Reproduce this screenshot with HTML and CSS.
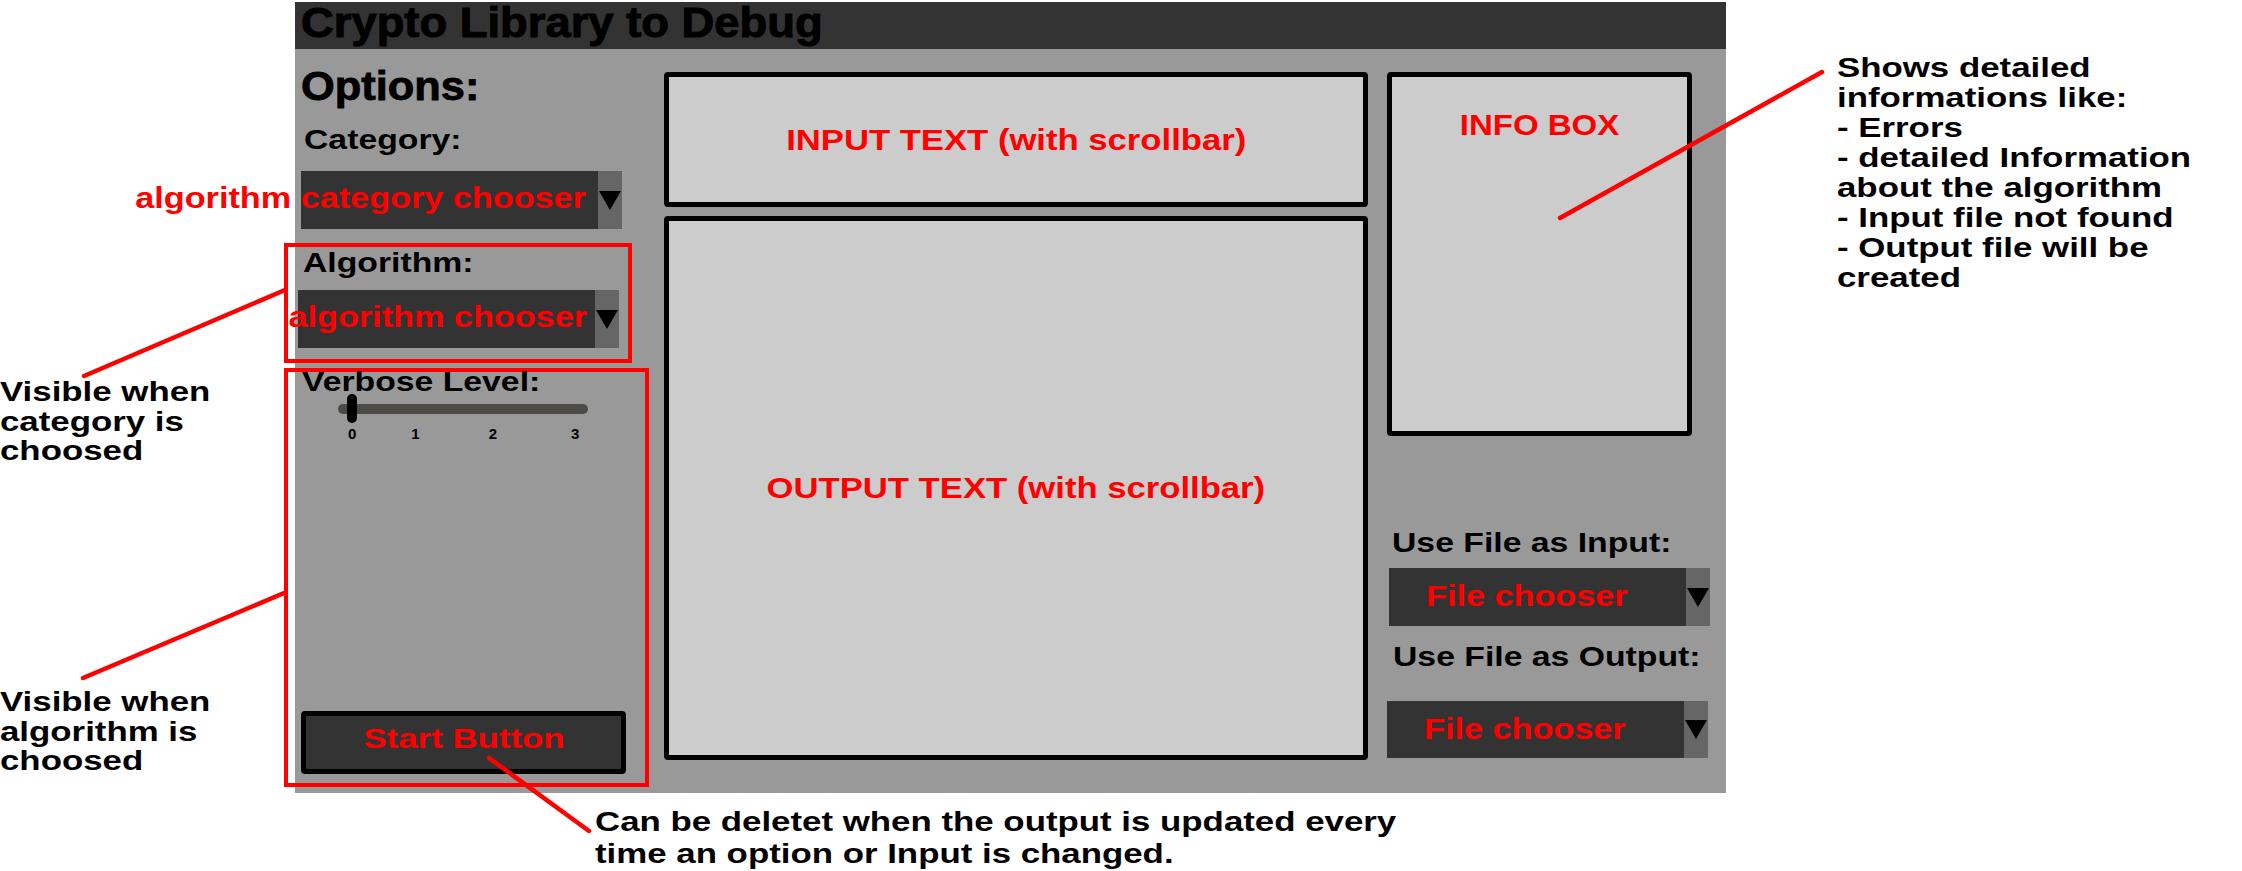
FILE: index.html
```html
<!DOCTYPE html>
<html lang="en">
<head>
<meta charset="utf-8">
<title>Crypto Library to Debug – mockup</title>
<link rel="stylesheet" href="styles.css">
</head>
<body>
<div class="page">
  <div class="app">
    <header class="titlebar"><span class="txt">Crypto Library to Debug</span></header>
    <div class="workspace">
      <aside class="options">
        <h2 class="heading"><span class="txt">Options:</span></h2>
        <div class="label label-category"><span class="txt">Category:</span></div>
        <div class="select select-category">
          <span class="select-value"><span class="txt">algorithm category chooser</span></span>
          <span class="select-arrow"><svg width="22" height="19" viewBox="0 0 22 19"><polygon points="0,0 22,0 11,19" fill="#000"/></svg></span>
        </div>
        <section class="group group-algorithm">
          <div class="label label-algorithm"><span class="txt">Algorithm:</span></div>
          <div class="select select-algorithm">
            <span class="select-value"><span class="txt">algorithm chooser</span></span>
            <span class="select-arrow"><svg width="22" height="19" viewBox="0 0 22 19"><polygon points="0,0 22,0 11,19" fill="#000"/></svg></span>
          </div>
        </section>
        <section class="group group-verbose">
          <div class="label label-verbose"><span class="txt">Verbose Level:</span></div>
          <div class="slider">
            <div class="slider-track"></div>
            <div class="slider-thumb"></div>
          </div>
          <div class="ticks">
            <span class="tick">0</span>
            <span class="tick tick-1">1</span>
            <span class="tick tick-2">2</span>
            <span class="tick tick-3">3</span>
          </div>
          <button class="start" type="button"><span class="txt">Start Button</span></button>
        </section>
      </aside>
      <main class="texts">
        <div class="textbox textbox-input"><span class="txt">INPUT TEXT (with scrollbar)</span></div>
        <div class="textbox textbox-output"><span class="txt">OUTPUT TEXT (with scrollbar)</span></div>
      </main>
      <aside class="side">
        <div class="info"><span class="txt">INFO BOX</span></div>
        <div class="label label-file-in"><span class="txt">Use File as Input:</span></div>
        <div class="select select-file select-file-in">
          <span class="select-value"><span class="txt">File chooser</span></span>
          <span class="select-arrow"><svg width="22" height="19" viewBox="0 0 22 19"><polygon points="0,0 22,0 11,19" fill="#000"/></svg></span>
        </div>
        <div class="label label-file-out"><span class="txt">Use File as Output:</span></div>
        <div class="select select-file select-file-out">
          <span class="select-value"><span class="txt">File chooser</span></span>
          <span class="select-arrow"><svg width="22" height="19" viewBox="0 0 22 19"><polygon points="0,0 22,0 11,19" fill="#000"/></svg></span>
        </div>
      </aside>
    </div>
  </div>

  <p class="note note-category">Visible when<br>category is<br>choosed</p>
  <p class="note note-algorithm">Visible when<br>algorithm is<br>choosed</p>
  <p class="note note-info">Shows detailed<br>informations like:<br>- Errors<br>- detailed Information<br>about the algorithm<br>- Input file not found<br>- Output file will be<br>created</p>
  <p class="note note-start">Can be deletet when the output is updated every<br>time an option or Input is changed.</p>

  <svg class="callouts" width="2242" height="871" viewBox="0 0 2242 871">
    <g stroke="#ff0000" stroke-width="4.5" stroke-linecap="round" fill="none">
      <line x1="84" y1="376" x2="285" y2="290"/>
      <line x1="83" y1="678" x2="284" y2="593"/>
      <line x1="489" y1="758" x2="589" y2="831"/>
      <line x1="1560" y1="218" x2="1822" y2="72"/>
    </g>
  </svg>
</div>
</body>
</html>
```

FILE: styles.css
```css
* {
  box-sizing: border-box;
}

html,
body {
  margin: 0;
  background: #ffffff;
}

body {
  font-family: "Liberation Sans", Arial, sans-serif;
  font-weight: 700;
  color: #000000;
}

.page {
  position: relative;
  width: 2242px;
  height: 871px;
  overflow: hidden;
}

/* The mockup's lettering is horizontally stretched; the inner text spans
   are widened around their anchor point. */
.txt {
  display: inline-block;
  white-space: nowrap;
  transform-origin: left center;
}

/* ---------- application frame ---------- */

.app {
  margin-left: 295px;
  padding-top: 2px;
  width: 1431px;
}

.titlebar {
  height: 47px;
  padding-left: 6px;
  background: #333333;
  font-size: 42px;
  line-height: 41px;
  white-space: nowrap;
}

.titlebar .txt {
  transform: scaleX(1.08);
  -webkit-text-stroke: 1px #000000;
}

.workspace {
  display: flex;
  height: 744px;
  padding-left: 6px;
  background: #999999;
}

/* ---------- left: options ---------- */

.options {
  width: 349px;
  display: flex;
  flex-direction: column;
}

.heading {
  margin: 17px 0 0;
  font-size: 40px;
  line-height: 40px;
  font-weight: 700;
}

.heading .txt {
  transform: scaleX(1.085);
  -webkit-text-stroke: 0.8px #000000;
}

.label {
  font-size: 27px;
  line-height: 28px;
  white-space: nowrap;
}

.label .txt {
  transform: scaleX(1.25);
}

.label-category {
  margin: 20px 0 0 3px;
}

.select {
  display: flex;
  width: 321px;
  height: 58px;
  background: #333333;
}

.select-category {
  margin-top: 17px;
}

.select-value {
  flex: 1;
  min-width: 0;
  display: flex;
  align-items: center;
  justify-content: flex-end;
  padding-right: 12px;
  padding-bottom: 3px;
  color: #ff0000;
  font-size: 29px;
  white-space: nowrap;
}

.select-value .txt {
  transform-origin: right center;
  transform: scaleX(1.18);
}

.select-arrow {
  width: 24px;
  flex: none;
  display: flex;
  align-items: center;
  justify-content: center;
  background: #666666;
}

.select-arrow svg {
  display: block;
}

.group {
  margin-left: -17px;
  border: 4px solid #ff0000;
}

.group-algorithm {
  width: 348px;
  height: 120px;
  margin-top: 14px;
  padding: 2px 0 0 10px;
}

.label-algorithm {
  margin-left: 5px;
}

.select-algorithm {
  margin-top: 13px;
}

.select-algorithm .select-value {
  padding-right: 8px;
}

.group-verbose {
  width: 365px;
  height: 419px;
  margin-top: 5px;
  padding: 0 0 9px 10px;
  display: flex;
  flex-direction: column;
}

.label-verbose {
  margin-left: 4px;
  line-height: 20px;
}

.slider {
  position: relative;
  width: 250px;
  height: 29px;
  margin: 2px 0 0 40px;
  display: flex;
  align-items: center;
}

.slider-track {
  width: 100%;
  height: 10px;
  border-radius: 5px;
  background: #4d4b48;
}

.slider-thumb {
  position: absolute;
  left: 9px;
  top: 0;
  width: 10px;
  height: 29px;
  border-radius: 5px;
  background: #000000;
}

.ticks {
  display: flex;
  margin: 3px 0 0 50px;
  font-size: 15px;
  line-height: 15px;
}

.tick-1 {
  margin-left: 55px;
}

.tick-2 {
  margin-left: 69px;
}

.tick-3 {
  margin-left: 74px;
}

.start {
  margin: auto 0 0 3px;
  width: 325px;
  height: 63px;
  padding: 0 0 6px;
  border: 5px solid #000000;
  border-radius: 4px;
  background: #333333;
  color: #ff0000;
  font-family: inherit;
  font-weight: 700;
  font-size: 27px;
  display: flex;
  align-items: center;
  justify-content: center;
}

.start .txt {
  transform-origin: center;
  transform: scaleX(1.29);
}

/* ---------- middle: text areas ---------- */

.texts {
  width: 704px;
  margin-left: 14px;
  display: flex;
  flex-direction: column;
}

.textbox {
  display: flex;
  align-items: center;
  justify-content: center;
  border: 5px solid #000000;
  border-radius: 4px;
  background: #cccccc;
  color: #ff0000;
  font-size: 30px;
  white-space: nowrap;
}

.textbox .txt {
  transform-origin: center;
  transform: scaleX(1.155);
}

.textbox-input {
  margin-top: 23px;
  height: 135px;
}

.textbox-output {
  margin-top: 9px;
  height: 544px;
}

/* ---------- right: info + files ---------- */

.side {
  width: 339px;
  margin-left: 19px;
  display: flex;
  flex-direction: column;
}

.info {
  width: 305px;
  height: 364px;
  margin-top: 23px;
  padding-top: 33px;
  border: 5px solid #000000;
  border-radius: 4px;
  background: #cccccc;
  color: #ff0000;
  font-size: 30px;
  line-height: 30px;
  text-align: center;
}

.info .txt {
  transform-origin: center;
  transform: scaleX(1.1);
}

.label-file-in {
  margin: 93px 0 0 5px;
}

.label-file-out {
  margin: 17px 0 0 6px;
}

.select-file .select-value {
  justify-content: flex-start;
  padding: 0 0 1px 37px;
}

.select-file .select-value .txt {
  transform-origin: left center;
}

.select-file-in {
  margin: 11px 0 0 2px;
}

.select-file-out {
  margin-top: 30px;
  height: 57px;
}

/* ---------- annotations ---------- */

.note {
  position: absolute;
  margin: 0;
  font-size: 27px;
  line-height: 29.5px;
  white-space: nowrap;
  transform-origin: left top;
  transform: scaleX(1.29);
}

.note-category {
  left: 0;
  top: 378px;
}

.note-algorithm {
  left: 0;
  top: 688px;
}

.note-info {
  left: 1837px;
  top: 53px;
  line-height: 30px;
}

.note-start {
  left: 595px;
  top: 806px;
  line-height: 32px;
}

.callouts {
  position: absolute;
  left: 0;
  top: 0;
  pointer-events: none;
}
```
